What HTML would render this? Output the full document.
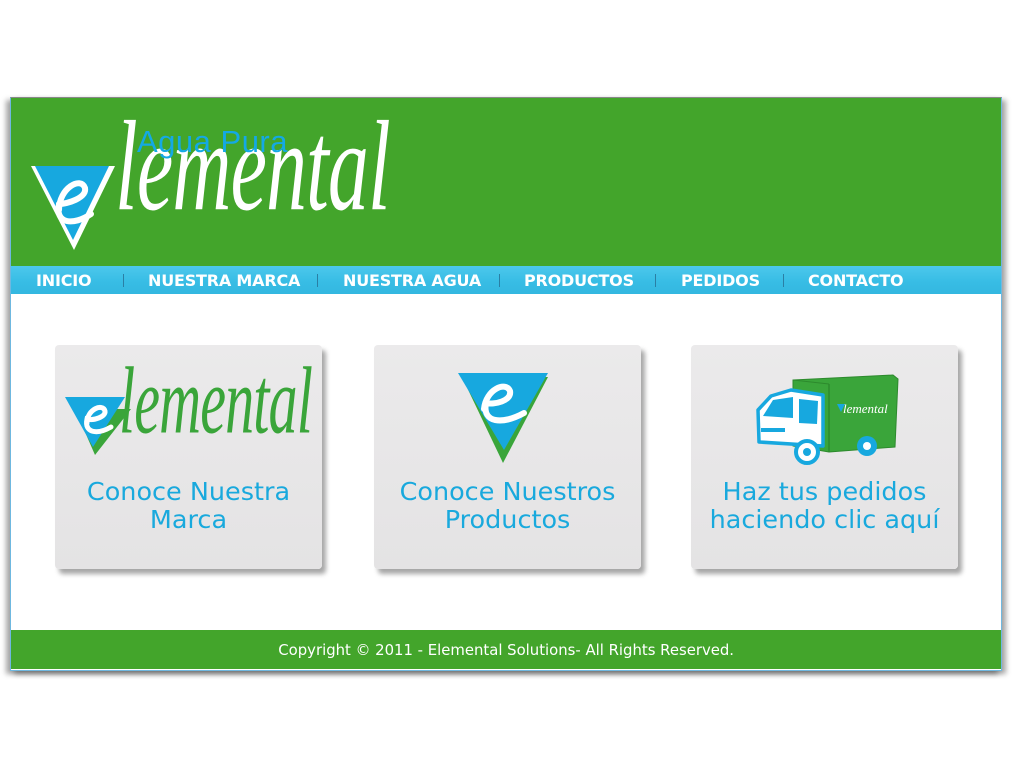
<!DOCTYPE html>
<html><head><meta charset="utf-8">
<style>
html,body{margin:0;padding:0;background:#fff;}
body{width:1012px;height:779px;position:relative;overflow:hidden;font-family:"Liberation Sans",sans-serif;}
.wrap{position:absolute;left:10px;top:97px;width:990px;height:572px;border:1px solid #6fb8e0;border-top:1px solid #888;box-shadow:-4px 3px 5px rgba(0,0,0,.35),4px 3px 5px rgba(0,0,0,.35);background:#fff;}
.head{position:absolute;left:0;top:0;width:990px;height:168px;background:#43a52b;overflow:hidden;}
.nav{position:absolute;left:0;top:168px;width:990px;height:28px;background:linear-gradient(#4cc8ec,#38bde5 55%,#33b7e0);}
.nav span{position:absolute;top:5px;color:#fff;font-weight:bold;font-size:16px;letter-spacing:-0.2px;font-family:"DejaVu Sans",sans-serif;}
.nav i{position:absolute;top:8px;width:1px;height:13px;background:#2a7fa5;}
.foot{position:absolute;left:0;top:532px;width:990px;height:39px;background:#43a52b;color:#fff;font-family:"DejaVu Sans",sans-serif;font-size:15px;text-align:center;line-height:40px;}
.foot span{display:inline-block;transform:scaleX(.99);}
.card{position:absolute;top:345px;width:267px;height:224px;background:linear-gradient(#ebeaeb,#e4e3e4);border-radius:4px;box-shadow:4px 5px 5px rgba(0,0,0,.35);}
.card .t{position:absolute;left:0;width:100%;text-align:center;color:#19a9dd;font-size:24.5px;line-height:28px;top:133px;font-family:"DejaVu Sans",sans-serif;transform:scaleX(1.04);}
.script{font-family:"Liberation Serif",serif;font-style:italic;position:absolute;white-space:nowrap;transform-origin:left bottom;}
</style></head><body>
<div class="wrap">
 <div class="head">
  <svg width="120" height="110" style="position:absolute;left:18px;top:62px" viewBox="0 0 120 110">
   <polygon points="2,6 86,6 45,90" fill="#fff"/>
   <polygon points="6,6 80,6 44,80" fill="#17a8df"/>
   <path d="M30,50 C30,28 52,16 56,28 C58,38 38,44 30,44" stroke="#fff" stroke-width="6" fill="none" stroke-linecap="round"/>
   <path d="M30,44 C26,64 44,66 62,54" stroke="#fff" stroke-width="6" fill="none" stroke-linecap="round"/>
  </svg>
  <div class="script" style="left:104px;top:36px;color:#fff;font-size:92px;transform:scale(0.89,1.4);letter-spacing:-1px;">lemental</div>
  <div style="position:absolute;left:126px;top:26px;color:#14a9e4;font-size:31px;letter-spacing:.5px;">Agua Pura</div>
 </div>
 <div class="nav">
  <span style="left:25px">INICIO</span><i style="left:112px"></i>
  <span style="left:137px">NUESTRA MARCA</span><i style="left:306px"></i>
  <span style="left:332px">NUESTRA AGUA</span><i style="left:488px"></i>
  <span style="left:513px">PRODUCTOS</span><i style="left:644px"></i>
  <span style="left:670px">PEDIDOS</span><i style="left:772px"></i>
  <span style="left:797px">CONTACTO</span>
 </div>
 <div class="foot"><span>Copyright © 2011 - Elemental Solutions- All Rights Reserved.</span></div>
</div>

<div class="card" style="left:55px">
  <svg width="80" height="70" style="position:absolute;left:10px;top:52px" viewBox="0 0 80 70">
   <polygon points="10,12 66,12 30,58" fill="#3aa53a"/>
   <polygon points="0,0 60,0 28,50" fill="#17a8df"/>
   <path d="M22,26 C22,12 38,6 40,14 C41,20 28,24 22,22 C19,36 32,38 46,30" stroke="#fff" stroke-width="5" fill="none" stroke-linecap="round"/>
  </svg>
  <div class="script" style="left:64px;top:36px;color:#3aa53a;font-size:66px;transform:scale(0.88,1.45);letter-spacing:-1px;">lemental</div>
  <div class="t">Conoce Nuestra<br>Marca</div>
</div>
<div class="card" style="left:374px">
  <svg width="100" height="100" style="position:absolute;left:84px;top:28px" viewBox="0 0 100 100">
   <polygon points="4,4 90,4 45,90" fill="#3aa53a"/>
   <polygon points="0,0 90,0 46,77" fill="#17a8df"/>
   <path d="M26,36 C28,16 48,8 52,18 C54,28 36,32 28,30 C24,50 44,52 66,40" stroke="#fff" stroke-width="6" fill="none" stroke-linecap="round"/>
  </svg>
  <div class="t">Conoce Nuestros<br>Productos</div>
</div>
<div class="card" style="left:691px">
  <svg width="160" height="100" style="position:absolute;left:60px;top:25px" viewBox="0 0 160 100">
   <polygon points="42,10 142,5 147,9 144,77 78,82 42,76" fill="#3aa53a" stroke="#2d8a2d" stroke-width="1"/>
   <line x1="78" y1="14" x2="78" y2="82" stroke="#2d8a2d" stroke-width="1.5"/>
   <line x1="42" y1="10" x2="78" y2="14" stroke="#2d8a2d" stroke-width="1"/>
   <polygon points="20,26 40,20 72,25 72,76 8,72 7,40" fill="#fff" stroke="#17a8df" stroke-width="3.5" stroke-linejoin="round"/>
   <polygon points="22,30 42,27 42,48 12,46" fill="#17a8df"/>
   <polygon points="48,29 67,31 66,54 48,53" fill="#17a8df"/>
   <rect x="10" y="58" width="24" height="4" fill="#17a8df"/>
   <circle cx="56" cy="82" r="11" fill="#fff" stroke="#17a8df" stroke-width="4"/>
   <circle cx="56" cy="82" r="4" fill="#17a8df"/>
   <circle cx="116" cy="76" r="10" fill="#17a8df"/>
   <circle cx="116" cy="76" r="4" fill="#fff"/>
   <polygon points="86,34 94,34 90,42" fill="#17a8df"/>
   <text x="92" y="43" font-family="Liberation Serif" font-style="italic" font-size="13" fill="#fff">lemental</text>
  </svg>
  <div class="t">Haz tus pedidos<br>haciendo clic aquí</div>
</div>
</body></html>
